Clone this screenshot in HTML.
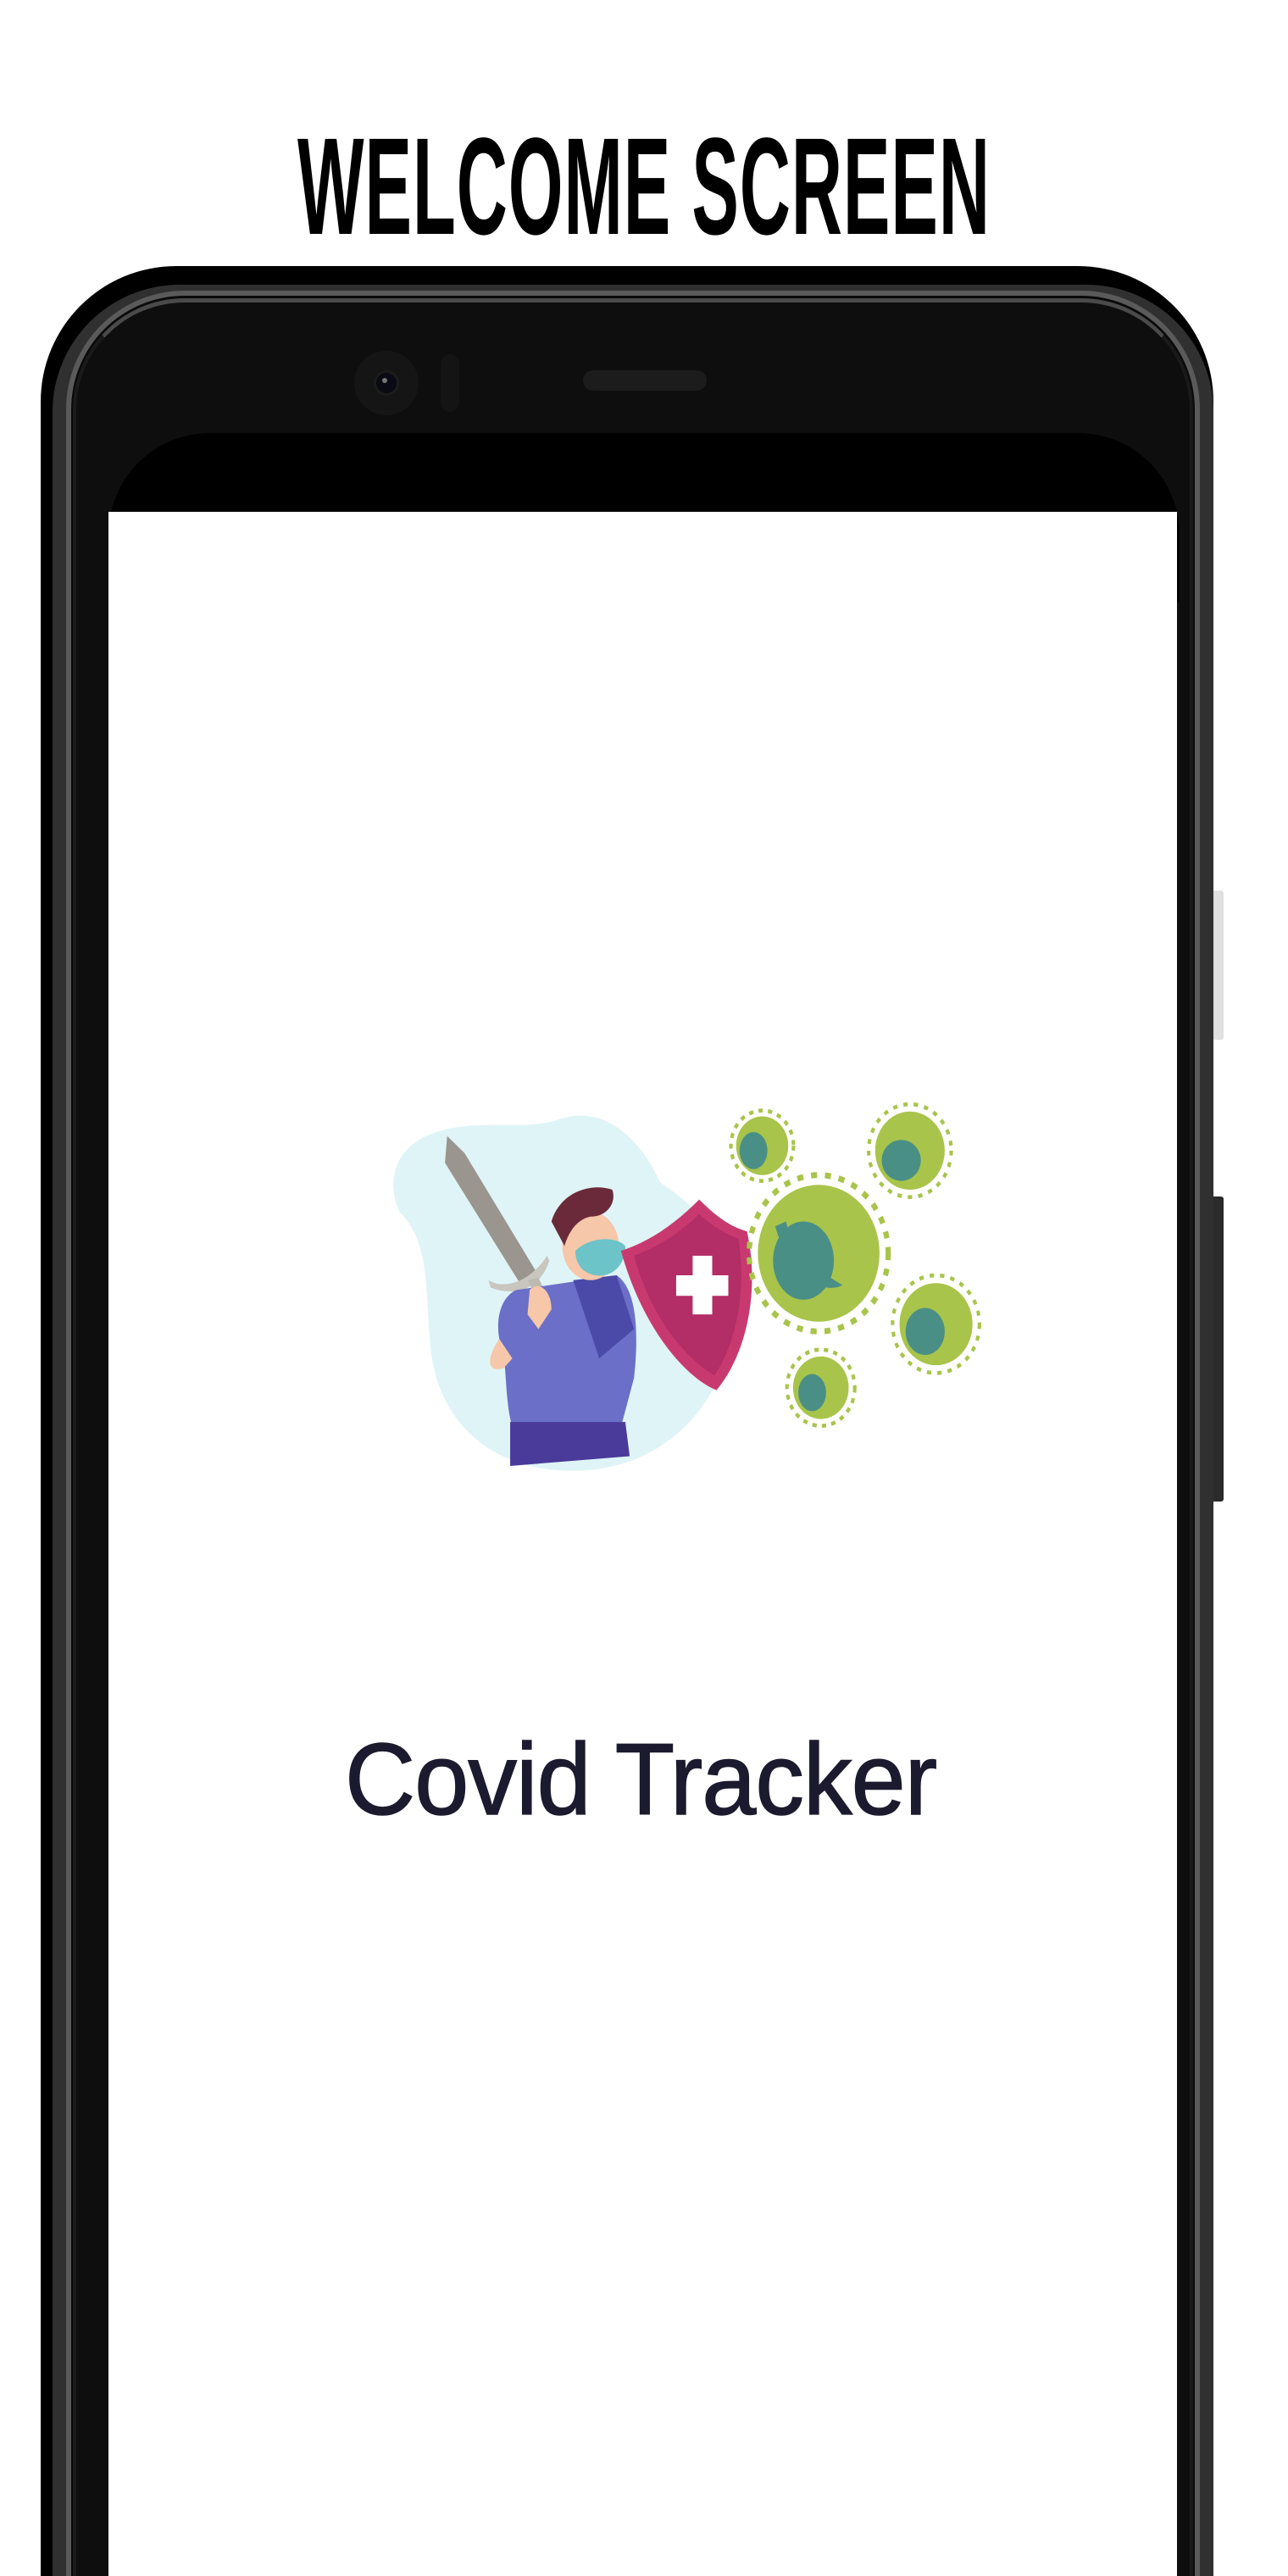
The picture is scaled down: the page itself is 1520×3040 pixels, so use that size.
<!DOCTYPE html>
<html><head><meta charset="utf-8"><style>
html,body{margin:0;padding:0;background:#fff;overflow:hidden;}
#wrap{width:1520px;height:3040px;position:relative;overflow:hidden;font-family:"Liberation Sans",sans-serif;background:#fff;}
.abs{position:absolute;}
#title{left:760px;top:138px;white-space:nowrap;font-weight:bold;font-size:163px;line-height:163px;transform:translateX(-50%) scaleX(0.51);color:#000;letter-spacing:2px;}
</style></head><body><div id="wrap">
<div id="title" class="abs">WELCOME SCREEN</div>

<div class="abs" style="left:1428px;top:1051px;width:16px;height:176px;background:#e0e0e0;border-radius:0 3px 3px 0;"></div>
<div class="abs" style="left:1428px;top:1412px;width:16px;height:360px;background:#2b2b2b;border-radius:0 3px 3px 0;"></div>

<div class="abs" style="left:48px;top:314px;width:1384px;height:2800px;background:#000;border-radius:160px 160px 0 0;"></div>
<div class="abs" style="left:62px;top:336px;width:1370px;height:2800px;background:#303030;border-radius:150px 150px 0 0;"></div>
<div class="abs" style="left:78px;top:343px;width:1338px;height:2800px;background:#0a0a0a;border-radius:140px 140px 0 0;border:6px solid #5a5a5a;border-bottom:none;box-sizing:border-box;"></div>
<div class="abs" style="left:86px;top:352px;width:1322px;height:2800px;background:#0e0e0e;border-radius:132px 132px 0 0;border:4px solid #1a1a1a;border-top:5px solid #4a4a4a;border-bottom:none;box-sizing:border-box;"></div>
<div class="abs" style="left:100px;top:373px;width:1296px;height:2800px;background:#0e0e0e;border-radius:120px 120px 0 0;"></div>

<div class="abs" style="left:418px;top:414px;width:76px;height:76px;border-radius:50%;background:#151515;"></div>
<div class="abs" style="left:444px;top:440px;width:24px;height:24px;border-radius:50%;background:#0a0a14;box-shadow:0 0 0 3px #1c1c1c;"></div>
<div class="abs" style="left:451px;top:446px;width:6px;height:6px;border-radius:50%;background:#777;"></div>
<div class="abs" style="left:520px;top:418px;width:22px;height:68px;border-radius:11px;background:#141414;"></div>
<div class="abs" style="left:688px;top:437px;width:146px;height:24px;border-radius:12px;background:#1c1c1c;"></div>

<div class="abs" style="left:128px;top:511px;width:1264px;height:200px;background:#000;border-radius:120px 120px 0 0;"></div>
<div class="abs" style="left:128px;top:604px;width:1261px;height:2500px;background:#fff;"></div>

<svg class="abs" style="left:420px;top:1280px;" width="800" height="900" viewBox="0 0 1560 1560" preserveAspectRatio="none">
  <path d="M150 110 C260 60 380 100 470 70 C580 40 660 120 700 200 C800 260 880 330 870 470 C860 640 720 790 500 790 C300 790 180 680 170 520 C160 420 170 320 100 260 C70 200 90 140 150 110Z" fill="#dff4f6"/>
  <polygon points="210,105 250,140 420,390 380,410 205,160" fill="#9a958f"/>
  <path d="M305 400 C340 420 400 405 440 350 L445 360 C420 430 350 430 310 415Z" fill="#c9c6c0"/>
  <polygon points="395,400 420,395 480,505 460,512" fill="#bdbab4"/>
  <circle cx="478" cy="515" r="18" fill="#e8e8e8"/>
  <path d="M370 420 L600 390 C650 420 650 520 640 600 L610 700 L360 700 C340 640 350 560 330 520 C320 470 340 430 370 420Z" fill="#6b6fc8"/>
  <path d="M500 400 L600 390 L640 500 L560 560Z" fill="#4b4aa8"/>
  <path d="M355 690 L620 690 L630 760 L355 780Z" fill="#4a3a9a"/>
  <path d="M330 520 C300 560 300 590 340 580 L360 560Z" fill="#f6c7a9"/>
  <path d="M400 420 C420 400 450 420 450 460 L420 500 L395 470Z" fill="#f6c7a9"/>
  <ellipse cx="540" cy="330" rx="65" ry="70" fill="#f6c7a9"/>
  <path d="M450 280 C470 220 540 200 590 215 C600 240 580 270 540 270 C510 275 490 300 480 330 Z" fill="#6b2a3a"/>
  <path d="M505 340 C540 310 600 310 620 330 C620 370 590 395 550 390 C520 385 505 365 505 340Z" fill="#6cc3c8"/>
  <path d="M610 340 C680 320 740 280 790 235 C830 270 860 290 900 300 C930 420 900 550 830 625 C760 600 660 500 610 340Z" fill="#c8396f"/>
  <path d="M640 350 C700 330 750 300 790 265 C820 290 850 305 880 315 C900 420 875 530 825 595 C760 560 680 480 640 350Z" fill="#b32d66"/>
  <rect x="775" y="350" width="45" height="120" fill="#fff"/>
  <rect x="737" y="390" width="120" height="42" fill="#fff"/>
  <g fill="#a8c44a">
    <circle cx="1065" cy="345" r="160" fill="none" stroke="#a8c44a" stroke-width="12" stroke-dasharray="14 18"/>
    <circle cx="1065" cy="345" r="140"/>
    <circle cx="935" cy="125" r="72" fill="none" stroke="#a8c44a" stroke-width="8" stroke-dasharray="10 12"/>
    <circle cx="935" cy="125" r="60"/>
    <circle cx="1275" cy="135" r="95" fill="none" stroke="#a8c44a" stroke-width="8" stroke-dasharray="10 14"/>
    <circle cx="1275" cy="135" r="80"/>
    <circle cx="1335" cy="490" r="100" fill="none" stroke="#a8c44a" stroke-width="8" stroke-dasharray="10 14"/>
    <circle cx="1335" cy="490" r="84"/>
    <circle cx="1070" cy="620" r="78" fill="none" stroke="#a8c44a" stroke-width="8" stroke-dasharray="10 12"/>
    <circle cx="1070" cy="620" r="64"/>
  </g>
  <g fill="#4a8f86">
    <path d="M965 290 C1000 400 1080 430 1120 410 C1060 380 1000 330 990 280Z"/>
    <ellipse cx="1030" cy="360" rx="70" ry="80"/>
    <ellipse cx="915" cy="135" rx="32" ry="38"/>
    <ellipse cx="1255" cy="155" rx="45" ry="42"/>
    <ellipse cx="1310" cy="505" rx="45" ry="48"/>
    <ellipse cx="1050" cy="630" rx="32" ry="38"/>
  </g>
</svg>

<div class="abs" style="left:407px;top:2030px;font-size:120px;line-height:140px;color:#1c1a2e;white-space:nowrap;letter-spacing:-1px;transform:scaleX(0.96);transform-origin:left;-webkit-text-stroke:1.5px #1c1a2e;">Covid Tracker</div>
</div></body></html>
